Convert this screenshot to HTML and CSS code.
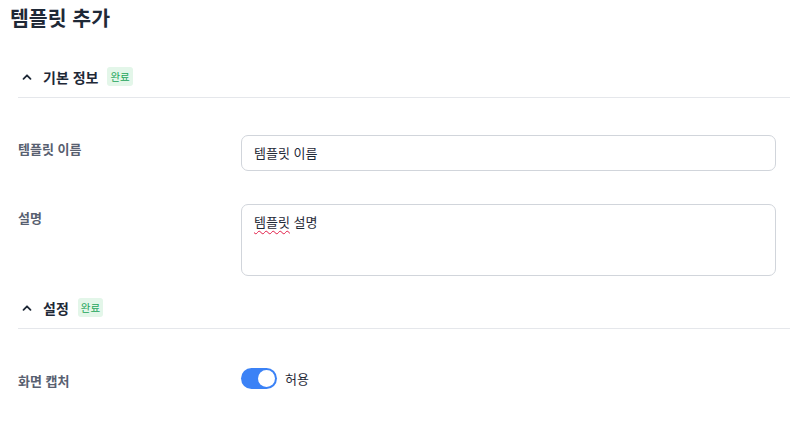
FILE: index.html
```html
<!DOCTYPE html>
<html lang="ko">
<head>
<meta charset="utf-8">
<link rel="stylesheet" href="styles.css">
</head>
<body>
<div class="page">
  <h1 class="title">템플릿 추가</h1>

  <section class="section">
    <div class="section-head">
      <svg class="chev" width="10" height="10" viewBox="0 0 10 10"><path d="M1.5 6.8 L5 3.3 L8.5 6.8" fill="none" stroke="#1f2937" stroke-width="1.8" stroke-linecap="round" stroke-linejoin="round"/></svg>
      <span class="section-title">기본 정보</span>
      <span class="badge">완료</span>
    </div>
    <div class="section-body">
      <div class="row">
        <label class="label">템플릿 이름</label>
        <div class="field"><div class="input">템플릿 이름</div></div>
      </div>
      <div class="row row-gap">
        <label class="label">설명</label>
        <div class="field"><div class="textarea"><span class="spell">템플릿</span> 설명</div></div>
      </div>
    </div>
  </section>

  <section class="section">
    <div class="section-head head2">
      <svg class="chev" width="10" height="10" viewBox="0 0 10 10"><path d="M1.5 6.8 L5 3.3 L8.5 6.8" fill="none" stroke="#1f2937" stroke-width="1.8" stroke-linecap="round" stroke-linejoin="round"/></svg>
      <span class="section-title">설정</span>
      <span class="badge">완료</span>
    </div>
    <div class="section-body body2">
      <div class="row toggle-row">
        <label class="label">화면 캡처</label>
        <div class="field toggle-field">
          <span class="switch"><span class="knob"></span></span>
          <span class="toggle-text">허용</span>
        </div>
      </div>
    </div>
  </section>
</div>
</body>
</html>
```

FILE: styles.css
```css
* { box-sizing: border-box; }
html, body { margin: 0; padding: 0; background: #fff; }
body {
  font-family: "Noto Sans CJK KR", "Noto Sans", sans-serif;
  color: #1f2937;
  width: 790px;
  overflow: hidden;
}
.page { padding: 0 0 0 10px; }
.title {
  margin: 0;
  padding-top: 2px;
  font-size: 20.5px;
  line-height: 30px;
  font-weight: 700;
  color: #1f2937;
}
.section { margin-left: 8px; }
.section-head {
  display: flex;
  align-items: center;
  margin-top: 32px;
  padding-left: 4px;
  border-bottom: 1px solid #e5e7eb;
  box-sizing: content-box;
  height: 25px;
  padding-bottom: 8px;
}
.head2 { margin-top: 0; }
.chev { margin-right: 11px; margin-left: 0; }
.section-title {
  font-size: 14px;
  font-weight: 700;
  color: #1f2937;
  margin-right: 9px;
}
.badge {
  font-size: 10.5px;
  line-height: 19px;
  padding: 0 3px;
  color: #22a55a;
  background: #e3f6e9;
  border-radius: 3px;
}
.section-body { padding-top: 37px; padding-right: 14px; }
.body2 { padding-top: 38px; }
.row { display: flex; align-items: flex-start; }
.row-gap { margin-top: 33px; margin-bottom: 19px; }
.label {
  width: 223px;
  flex: none;
  font-size: 13px;
  font-weight: 700;
  color: #586070;
  padding-top: 4px;
  line-height: 19px;
}
.field { flex: 1; }
.input, .textarea {
  border: 1px solid #d1d5db;
  border-radius: 7px;
  font-size: 13px;
  color: #1f2937;
  padding: 0 12px;
}
.input { height: 36px; line-height: 34px; }
.textarea { height: 72px; padding-top: 7px; line-height: 19px; }
.spell {
  text-decoration: underline wavy #e11d48;
  text-decoration-thickness: 1px;
  text-underline-offset: 3px;
}
.toggle-row { align-items: center; }
.toggle-field { display: flex; align-items: center; gap: 8px; }
.switch {
  width: 36px;
  height: 21px;
  border-radius: 11px;
  background: #3b82f6;
  position: relative;
  display: inline-block;
}
.knob {
  position: absolute;
  right: 2px;
  top: 2px;
  width: 17px;
  height: 17px;
  border-radius: 50%;
  background: #fff;
}
.toggle-text { font-size: 13px; color: #1f2937; }
```
